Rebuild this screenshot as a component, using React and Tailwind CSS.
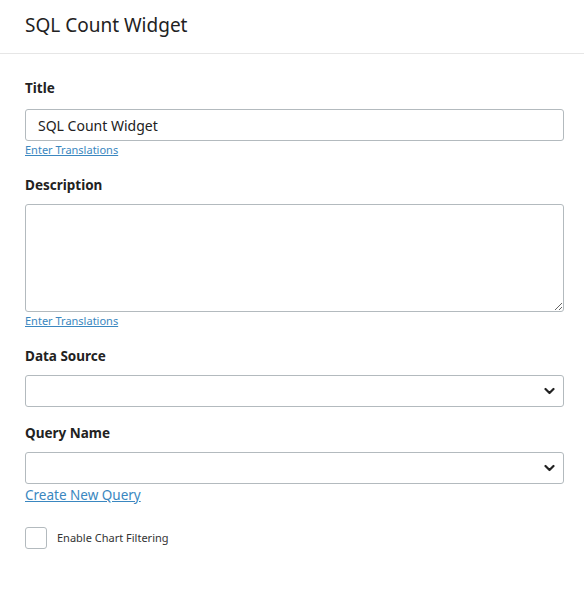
import React from 'react';

const font = { fontFamily: '"Noto Sans", "Open Sans", sans-serif' };

const Chevron = () => (
  <svg className="pointer-events-none absolute right-[9px] top-1/2 -translate-y-1/2 w-[11px] h-[7px]" viewBox="0 0 11 7" fill="none">
    <path d="M1.5 1.5l4 4 4-4" stroke="#222" strokeWidth="2.2" strokeLinecap="round" strokeLinejoin="round" />
  </svg>
);

const Label = ({ children }) => (
  <label className="block text-[13.5px] font-bold text-[#222] leading-5">{children}</label>
);

const TranslationsLink = () => (
  <a href="#" className="block text-[11px] leading-[14px] text-[#3a87c0] underline mt-[2px]">
    Enter Translations
  </a>
);

const SelectBox = () => (
  <div className="relative mt-[9px]">
    <select className="block w-full h-[32px] rounded-[3px] border border-[#b3babe] bg-white appearance-none" />
    <Chevron />
  </div>
);

export default function App() {
  return (
    <div className="w-[584px] h-[590px] bg-white text-[#222]" style={font}>
      <div className="h-[54px] border-b border-[#e6e6e6] pl-[25px] pt-[11px]">
        <h1 className="text-[19px] leading-[28px] text-[#222]">SQL Count Widget</h1>
      </div>

      <div className="pl-[25px] pr-[20px] pt-[24px]">
        <Label>Title</Label>
        <input
          defaultValue="SQL Count Widget"
          className="block w-full mt-[11px] h-[32px] rounded-[3px] border border-[#b3babe] px-[12px] text-[14px] text-[#222] outline-none"
        />
        <TranslationsLink />

        <div className="mt-[18px]">
          <Label>Description</Label>
          <textarea className="block w-full mt-[9px] h-[108px] rounded-[3px] border border-[#b3babe] outline-none" />
          <TranslationsLink />
        </div>

        <div className="mt-[18px]">
          <Label>Data Source</Label>
          <SelectBox />
        </div>

        <div className="mt-[16px]">
          <Label>Query Name</Label>
          <SelectBox />
          <a href="#" className="block text-[13.5px] leading-[20px] text-[#3a87c0] underline mt-[1px]">
            Create New Query
          </a>
        </div>

        <div className="mt-[22px] flex items-center gap-[10px]">
          <span className="block w-[22px] h-[22px] rounded-[3px] border border-[#b3babe] bg-white" />
          <span className="text-[11px] text-[#333]">Enable Chart Filtering</span>
        </div>
      </div>
    </div>
  );
}
